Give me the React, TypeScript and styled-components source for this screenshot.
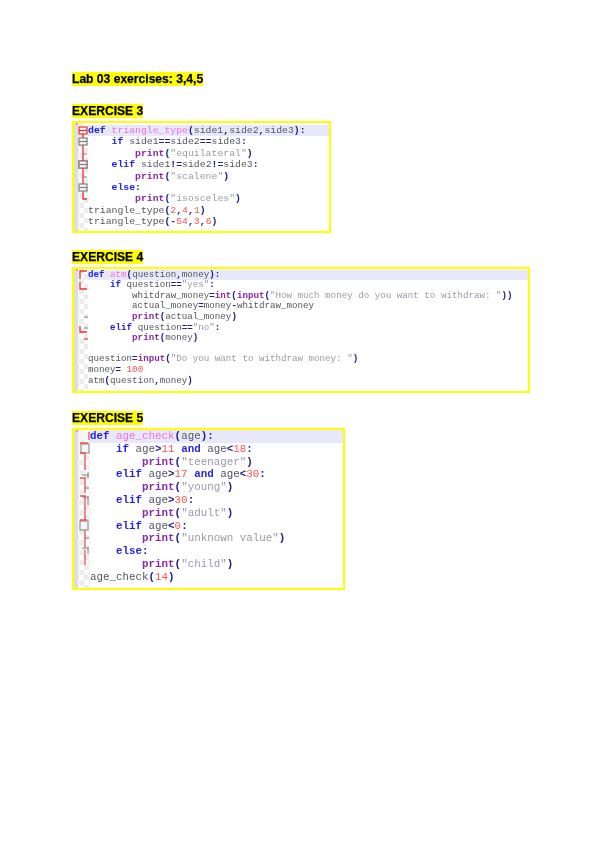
import React from "react";
import styled, { createGlobalStyle } from "styled-components";

const GlobalStyle = createGlobalStyle`
  html, body {
    margin: 0;
    padding: 0;
    background: #fff;
  }
`;

const Page = styled.div`
  width: 600px;
  height: 848px;
  box-sizing: border-box;
  padding: 72px 0 0 72px;
  overflow: hidden;
  font-family: "Liberation Sans", Arial, sans-serif;
`;

const Section = styled.section<{ $gap: number }>`
  margin-bottom: ${(p) => p.$gap}px;
`;

const Heading = styled.h2<{ $gap?: number }>`
  margin: 0 0 ${(p) => p.$gap ?? 3}px;
  font-size: 12.1px;
  line-height: 14px;
  font-weight: bold;
  color: #000;
  filter: blur(0.3px);
  -webkit-text-stroke: 0.25px #000;
  span {
    display: inline-block;
    background: #ffff00;
  }
`;

const CodeBox = styled.div<{ $width: number; $height: number }>`
  display: flex;
  box-sizing: border-box;
  width: ${(p) => p.$width}px;
  height: ${(p) => p.$height}px;
  border: 2px solid #ffff00;
  background: #fff;
`;

const Gutter = styled.div<{ $width: number }>`
  position: relative;
  flex: 0 0 ${(p) => p.$width}px;
  background-color: #fff;
  background-image:
    linear-gradient(#dedede, #dedede),
    repeating-conic-gradient(#ececec 0% 25%, #fff 0% 50%);
  background-size: 4px 100%, 10px 10px;
  background-repeat: no-repeat, repeat;
  filter: blur(0.35px);
  &::before {
    content: "";
    position: absolute;
    top: 0;
    left: 2px;
    width: 2px;
    height: 2px;
    background: #f0a060;
  }
  svg {
    display: block;
  }
`;

const Code = styled.div<{ $size: number; $line: number; $top: number }>`
  flex: 1;
  min-width: 0;
  padding-top: ${(p) => p.$top}px;
  font-family: "Liberation Mono", "Courier New", monospace;
  font-size: ${(p) => p.$size}px;
  line-height: ${(p) => p.$line}px;
  color: #555;
  white-space: pre;
  filter: blur(0.45px);
`;

const Line = styled.div<{ $current?: boolean }>`
  background: ${(p) => (p.$current ? "#e8e8fa" : "transparent")};
`;

const COLORS: Record<string, string> = {
  kw: "#2222e8",
  builtin: "#8a2aa8",
  def: "#f070e8",
  str: "#9a9aa8",
  num: "#ff5050",
  op: "#20208a",
  plain: "#555560",
};

const Tok = styled.span<{ $kind: string }>`
  color: ${(p) => COLORS[p.$kind]};
  font-weight: ${(p) => (["kw", "builtin", "op"].includes(p.$kind) ? "bold" : "normal")};
`;

const TOKEN_RE =
  /("[^"]*")|\b(def|if|elif|else|and)\b|\b(print|input|int)\b|\b(\d+)\b|([=!<>()+,:\-]+)/g;

function tokenize(src: string) {
  const out: { kind: string; text: string }[] = [];
  let last = 0;
  let afterDef = false;
  for (const m of src.matchAll(TOKEN_RE)) {
    const idx = m.index ?? 0;
    if (idx > last) {
      const text = src.slice(last, idx);
      // the function name right after def gets its own colour
      const isName = afterDef && text.trim() !== "";
      out.push({ kind: isName ? "def" : "plain", text });
      if (isName) afterDef = false;
    }
    const kind = m[1] ? "str" : m[2] ? "kw" : m[3] ? "builtin" : m[4] ? "num" : "op";
    out.push({ kind, text: m[0] });
    if (m[2] === "def") afterDef = true;
    last = idx + m[0].length;
  }
  if (last < src.length) out.push({ kind: "plain", text: src.slice(last) });
  return out;
}

const CodeBlock = ({ lines, size, line, top }: { lines: string[]; size: number; line: number; top: number }) => (
  <Code $size={size} $line={line} $top={top}>
    {lines.map((l, i) => (
      <Line key={i} $current={i === 0}>
        {tokenize(l).map((t, j) => (
          <Tok key={j} $kind={t.kind}>
            {t.text}
          </Tok>
        ))}
        {l === "" ? " " : null}
      </Line>
    ))}
  </Code>
);

const RED = "#ee3030";
const SOFT_RED = "#f05050";
const GREY = "#808080";

const FoldBox = ({ y, color }: { y: number; color: string }) => (
  <g fill="#f6f6f6" stroke={color} strokeWidth="1.200">
    <rect x={5} y={y} width="8" height="7" />
    <path d={`M5 ${y + 3.500}h8`} />
  </g>
);

const Fold3 = () => (
  <svg width="14" height="108" viewBox="0 0 14 108">
    <path d="M9 10V76h4" fill="none" stroke={RED} strokeWidth="1.300" />
    <path d="M9 31h4M9 54h4" stroke={GREY} strokeWidth="1" />
    <FoldBox y={4} color={RED} />
    <FoldBox y={15} color={GREY} />
    <rect x="5" y="38" width="8" height="7" fill="none" stroke={RED} strokeWidth="1.100" />
    <FoldBox y={38} color={GREY} />
    <FoldBox y={61} color={GREY} />
  </svg>
);

const Fold4 = () => (
  <svg width="14" height="122" viewBox="0 0 14 122">
    <path d="M13 2H6V10M6 13V20H13M6 57V63H13" fill="none" stroke={RED} strokeWidth="1.300" />
    <path d="M10 48h4M10 59h4" stroke={GREY} strokeWidth="1" />
    <path d="M10 70h4" stroke={RED} strokeWidth="1.200" />
  </svg>
);

const Fold5 = () => (
  <svg width="16" height="158" viewBox="0 0 16 158">
    <rect x="6" y="1" width="9" height="9" fill="#f6f6f6" />
    <rect x="7" y="14" width="8" height="9" fill="#f6f6f6" stroke={GREY} />
    <rect x="6" y="91" width="8" height="9" fill="#f6f6f6" stroke={GREY} />
    <path d="M8 45h7M14 42v6M11 58h4M8 67h7M14 67v8M11 108h4M8 118h7M14 118v6" fill="none" stroke={GREY} strokeWidth="1" />
    <path d="M15 2v8M6 13h8M6 23h5V40M6 48h5V63M6 66h5V90M6 90h7M11 100V117M11 120V135" fill="none" stroke={SOFT_RED} strokeWidth="1.300" />
  </svg>
);

const EX3 = [
  "def triangle_type(side1,side2,side3):",
  "    if side1==side2==side3:",
  '        print("equilateral")',
  "    elif side1!=side2!=side3:",
  '        print("scalene")',
  "    else:",
  '        print("isosceles")',
  "triangle_type(2,4,1)",
  "triangle_type(-54,3,6)",
];

const EX4 = [
  "def atm(question,money):",
  '    if question=="yes":',
  '        whitdraw_money=int(input("How much money do you want to withdraw: "))',
  "        actual_money=money-whitdraw_money",
  "        print(actual_money)",
  '    elif question=="no":',
  "        print(money)",
  "",
  'question=input("Do you want to withdraw money: ")',
  "money= 100",
  "atm(question,money)",
];

const EX5 = [
  "def age_check(age):",
  "    if age>11 and age<18:",
  '        print("teenager")',
  "    elif age>17 and age<30:",
  '        print("young")',
  "    elif age>30:",
  '        print("adult")',
  "    elif age<0:",
  '        print("unknown value")',
  "    else:",
  '        print("child")',
  "age_check(14)",
];

export default function App() {
  return (
    <Page>
      <GlobalStyle />
      <Section $gap={18}>
        <Heading $gap={0}>
          <span>Lab 03 exercises: 3,4,5</span>
        </Heading>
      </Section>
      <Section $gap={17}>
        <Heading>
          <span>EXERCISE 3</span>
        </Heading>
        <CodeBox $width={259} $height={112}>
          <Gutter $width={14}>
            <Fold3 />
          </Gutter>
          <CodeBlock lines={EX3} size={9.8} line={11.4} top={2} />
        </CodeBox>
      </Section>
      <Section $gap={18}>
        <Heading>
          <span>EXERCISE 4</span>
        </Heading>
        <CodeBox $width={458} $height={126}>
          <Gutter $width={14}>
            <Fold4 />
          </Gutter>
          <CodeBlock lines={EX4} size={9.2} line={10.6} top={0.7} />
        </CodeBox>
      </Section>
      <Section $gap={0}>
        <Heading>
          <span>EXERCISE 5</span>
        </Heading>
        <CodeBox $width={273} $height={162}>
          <Gutter $width={16}>
            <Fold5 />
          </Gutter>
          <CodeBlock lines={EX5} size={10.85} line={12.8} top={0} />
        </CodeBox>
      </Section>
    </Page>
  );
}
